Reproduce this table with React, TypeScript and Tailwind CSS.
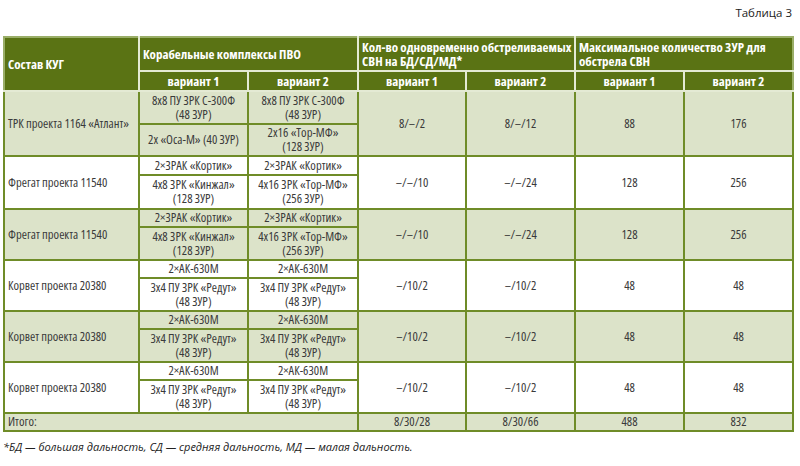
const nb = (s: string) => s.replace(/ /g, "\u00a0");
const two = (a: string, b: string) => `${nb(a)} ${nb(b)}`;

const rows = [
  {
    name: "ТРК проекта 1164 «Атлант»",
    h: ["h-[33px]", "h-[32px]"],
    a: two("8x8 ПУ ЗРК С-300Ф", "(48 ЗУР)"),
    b: two("8x8 ПУ ЗРК С-300Ф", "(48 ЗУР)"),
    c: "2x «Оса-М» (40 ЗУР)",
    d: two("2x16 «Тор-МФ»", "(128 ЗУР)"),
    n: ["8/–/2", "8/–/12", "88", "176"],
    green: true,
  },
  {
    name: "Фрегат проекта 11540",
    h: ["h-[19px]", "h-[34px]"],
    a: "2×ЗРАК «Кортик»",
    b: "2×ЗРАК «Кортик»",
    c: two("4x8 ЗРК «Кинжал»", "(128 ЗУР)"),
    d: two("4x16 ЗРК «Тор-МФ»", "(256 ЗУР)"),
    n: ["–/–/10", "–/–/24", "128", "256"],
    green: false,
  },
  {
    name: "Фрегат проекта 11540",
    h: ["h-[18px]", "h-[33px]"],
    a: "2×ЗРАК «Кортик»",
    b: "2×ЗРАК «Кортик»",
    c: two("4x8 ЗРК «Кинжал»", "(128 ЗУР)"),
    d: two("4x16 ЗРК «Тор-МФ»", "(256 ЗУР)"),
    n: ["–/–/10", "–/–/24", "128", "256"],
    green: true,
  },
  ...[false, true, false].map((green) => ({
    name: "Корвет проекта 20380",
    h: ["h-[18px]", "h-[33px]"],
    a: "2×АК-630М",
    b: "2×АК-630М",
    c: two("3x4 ПУ ЗРК «Редут»", "(48 ЗУР)"),
    d: two("3x4 ПУ ЗРК «Редут»", "(48 ЗУР)"),
    n: ["–/10/2", "–/10/2", "48", "48"],
    green,
  })),
];

const td = "border-2 border-[#6f8c28] text-center align-middle p-0";
const th = "border-2 border-[#e4ead4] font-bold text-white";

export default function App() {
  return (
    <div
      className="w-[800px] h-[466px] bg-white text-[#3a3a3a] font-stretch-condensed"
      style={{ fontFamily: "'Open Sans', 'Liberation Sans', sans-serif" }}
    >
      <div className="flex justify-end pr-[8px] pt-[5px] h-[36px] text-[11.5px] leading-[16px] text-[#222] font-stretch-normal">
        Таблица 3
      </div>
      <table className="ml-[3px] w-[789px] table-fixed border-collapse text-[12.6px] leading-[14px]">
        <colgroup>
          <col className="w-[135px]" />
          <col className="w-[109px]" />
          <col className="w-[110px]" />
          <col className="w-[108px]" />
          <col className="w-[109px]" />
          <col className="w-[109px]" />
          <col className="w-[109px]" />
        </colgroup>
        <thead className="bg-[#5a7314] text-[13px] leading-[14px]">
          <tr className="h-[34px]">
            <th rowSpan={2} className={`${th} text-left pl-[3px] border-l-[#9aae68] border-t-[#9aae68]`}>
              Состав КУГ
            </th>
            <th colSpan={2} className={`${th} text-left pl-[3px] border-t-[#9aae68]`}>
              Корабельные комплексы ПВО
            </th>
            <th colSpan={2} className={`${th} text-left pl-[3px] border-t-[#9aae68]`}>
              Кол-во одновременно обстреливаемых СВН на БД/СД/МД*
            </th>
            <th colSpan={2} className={`${th} text-left pl-[3px] border-t-[#9aae68] border-r-[#9aae68]`}>
              Максимальное количество ЗУР для обстрела СВН
            </th>
          </tr>
          <tr className="h-[20px]">
            {[1, 2, 1, 2, 1, 2].map((v, i) => (
              <th key={i} className={`${th} text-center ${i === 5 ? "border-r-[#9aae68]" : ""}`}>
                вариант {v}
              </th>
            ))}
          </tr>
        </thead>
        <tbody>
          {rows.map((r, i) => {
            const bg = r.green ? "bg-[#dce3c9]" : "bg-white";
            return [
              <tr key={`${i}a`} className={`${r.h[0]} ${bg}`}>
                <td rowSpan={2} className={`${td} text-left pl-[3px]`}>
                  {r.name}
                </td>
                <td className={td}>{r.a}</td>
                <td className={td}>{r.b}</td>
                {r.n.map((v, j) => (
                  <td key={j} rowSpan={2} className={td}>
                    {v}
                  </td>
                ))}
              </tr>,
              <tr key={`${i}b`} className={`${r.h[1]} ${bg}`}>
                <td className={td}>{r.c}</td>
                <td className={td}>{r.d}</td>
              </tr>,
            ];
          })}
          <tr className="h-[18px] bg-[#dce3c9]">
            <td colSpan={3} className={`${td} text-left pl-[3px]`}>
              Итого:
            </td>
            <td className={td}>8/30/28</td>
            <td className={td}>8/30/66</td>
            <td className={td}>488</td>
            <td className={td}>832</td>
          </tr>
        </tbody>
      </table>
      <div className="pl-[3px] pt-[7px] text-[11px] italic text-[#222] font-stretch-normal">
        *БД — большая дальность, СД — средняя дальность, МД — малая дальность.
      </div>
    </div>
  );
}
